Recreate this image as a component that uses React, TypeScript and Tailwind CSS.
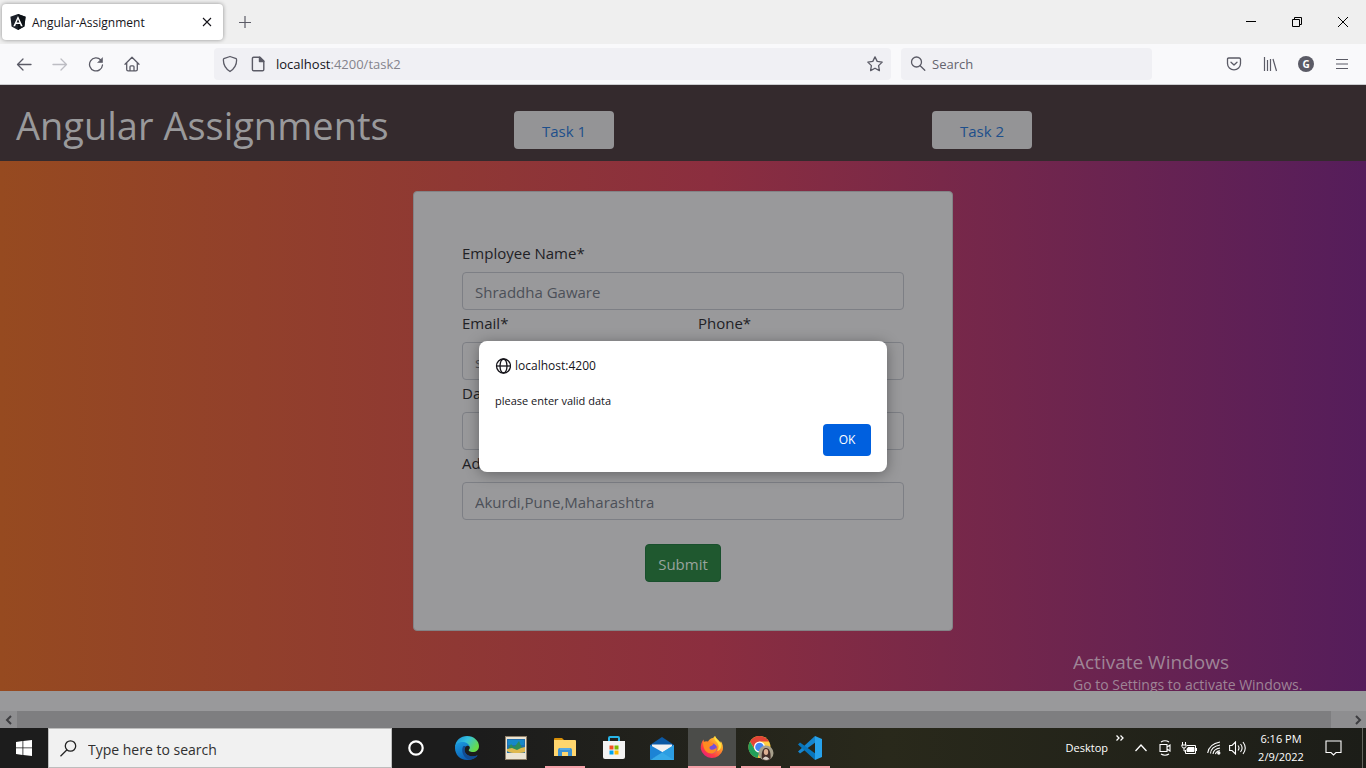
import React from 'react';

type FieldProps = { id: string; label: string; placeholder?: string; className?: string };

function Field({ id, label, placeholder, className = '' }: FieldProps) {
  return (
    <div className={`flex flex-col ${className}`}>
      <label htmlFor={id} className="mb-2 h-6 leading-[26px] text-[#212125]">{label}</label>
      <input
        id={id}
        placeholder={placeholder}
        className="h-[38px] w-full rounded border border-[#7d7f85] bg-transparent px-3 pt-0.5 text-[#212125] placeholder:text-[#4c5058] placeholder:opacity-100"
      />
    </div>
  );
}

function AngularIcon() {
  return (
    <svg width="16" height="16" viewBox="0 0 16 16" aria-hidden="true">
      <path d="M8 0 15.6 2.7 14.4 12.6 8 16 1.6 12.6.4 2.7Z" fill="#1b2129" />
      <path d="M8 0 15.6 2.7 14.4 12.6 8 16Z" fill="#0c1116" />
      <path d="M8 1.9 3.3 12.3h1.8l.9-2.4h4l.9 2.4h1.8ZM8 5.2l1.4 3.3H6.6Z" fill="#fff" fillRule="evenodd" />
    </svg>
  );
}

function TabStrip() {
  return (
    <div className="flex h-11 items-center bg-[#efefef]">
      <div className="ml-[2px] flex h-9 w-[221px] items-center rounded bg-white pl-2 shadow-[0_0_4px_rgba(0,0,0,0.4)]">
        <AngularIcon />
        <span className="ml-[6px] flex-1 pt-0.5 text-[12px] text-[#15141a]">Angular-Assignment</span>
        <button aria-label="Close tab" className="flex h-6 w-8 items-center justify-center">
          <svg width="10" height="10" viewBox="0 0 10 10" stroke="#15141a" strokeWidth="1.1"><path d="M1 1 9 9M9 1 1 9" /></svg>
        </button>
      </div>
      <button aria-label="New tab" className="ml-[14px] flex size-4 items-center justify-center">
        <svg width="14" height="14" viewBox="0 0 14 14" stroke="#5b5b66" strokeWidth="1.2"><path d="M7 1v12M1 7.500h12" /></svg>
      </button>
      <div className="ml-auto flex">
        <button aria-label="Minimize" className="flex h-8 w-[46px] items-center justify-center">
          <svg width="10" height="10" viewBox="0 0 10 10"><path d="M0 4h10v1H0z" /></svg>
        </button>
        <button aria-label="Restore" className="flex h-8 w-[46px] items-center justify-center">
          <svg width="10" height="10" viewBox="0 0 10 10" fill="none" stroke="#000"><path d="M.5 2.5h7v7h-7zM2.5 2V.5h7v7H8" /></svg>
        </button>
        <button aria-label="Close window" className="flex h-8 w-[46px] items-center justify-center">
          <svg width="10" height="10" viewBox="0 0 10 10" stroke="#000"><path d="M0 0 10 10M10 0 0 10" /></svg>
        </button>
      </div>
    </div>
  );
}

function NavBar() {
  return (
    <div className="flex h-[41px] items-center border-b border-[#cccdd0] bg-[#f9f9fb] text-[13px]">
      <div className="flex w-[214px] items-center gap-5 pl-4">
        <button aria-label="Back">
          <svg width="16" height="16" viewBox="0 0 16 16" fill="none" stroke="#5b5b66" strokeWidth="1.3" strokeLinecap="round" strokeLinejoin="round"><path d="M15 8.500H1.5M7 3 1.5 8.500 7 14" /></svg>
        </button>
        <button aria-label="Forward">
          <svg width="16" height="16" viewBox="0 0 16 16" fill="none" stroke="#bdbdc3" strokeWidth="1.3" strokeLinecap="round" strokeLinejoin="round"><path d="M1 8.500h13.5M9 3 14.5 8.500 9 14" /></svg>
        </button>
        <button aria-label="Reload">
          <svg width="16" height="16" viewBox="0 0 16 16" fill="none" stroke="#5b5b66" strokeWidth="1.3" strokeLinecap="round"><path d="M12.8 4A6.5 6.5 0 1 0 14.5 9" /><path d="M14.5 2V6.500H10z" fill="#5b5b66" strokeWidth=".6" /></svg>
        </button>
        <button aria-label="Home">
          <svg width="16" height="16" viewBox="0 0 16 16" fill="none" stroke="#5b5b66" strokeWidth="1.3" strokeLinecap="round" strokeLinejoin="round"><path d="M1 8.200 8 1.200l7 7M2.700 6.800v6.700q0 1.400 1.400 1.400h7.800q1.400 0 1.400-1.400V6.800M6 14.800v-4q0-1 1-1h2q1 0 1 1v4" /></svg>
        </button>
      </div>
      <div className="flex h-8 flex-1 items-center rounded bg-[#f0f0f4] px-2">
        <svg width="16" height="18" viewBox="0 0 16 18" fill="none" stroke="#5b5b66" strokeWidth="1.3" strokeLinejoin="round"><path d="M8 1.500 14.200 3.700q.4 0 .4 1.500 0 7-6.600 11.300Q1.400 12.200 1.400 5.200q0-1.500.4-1.500Z" /></svg>
        <svg className="ml-3" width="16" height="16" viewBox="0 0 16 16" fill="none" stroke="#5b5b66" strokeWidth="1.4" strokeLinejoin="round"><path d="M3.700 1.200H10L13.800 5v8.500q0 1.300-1.300 1.300H3.700q-1.300 0-1.300-1.300v-11q0-1.300 1.300-1.300Z" /><path d="M9.500 1.200v4.300h4.300z" fill="#5b5b66" /></svg>
        <div className="ml-[10px] flex-1 pt-0.5 text-[#15141a]">localhost<span className="text-[#84848c]">:4200/task2</span></div>
        <button aria-label="Bookmark">
          <svg width="16" height="16" viewBox="0 0 16 16" fill="none" stroke="#5b5b66" strokeWidth="1.3" strokeLinejoin="round"><path d="m8 .9 2.200 4.500 5 .7-3.600 3.500.8 5L8 12.200l-4.400 2.400.8-5L.8 6.100l5-.7Z" /></svg>
        </button>
      </div>
      <label className="ml-[10px] flex h-8 w-[251px] items-center rounded bg-[#f0f0f4] pl-[9px]">
        <svg width="16" height="16" viewBox="0 0 16 16" fill="none" stroke="#5b5b66" strokeWidth="1.3" strokeLinecap="round"><circle cx="6.500" cy="6" r="5" /><path d="m10.200 9.700 4.600 4.600" /></svg>
        <input aria-label="Search the web" placeholder="Search" className="ml-[6px] w-40 bg-transparent pt-0.5 placeholder:text-[#64646e]" />
      </label>
      <div className="ml-[74px] flex items-center gap-5 pr-4">
        <button aria-label="Pocket">
          <svg width="16" height="16" viewBox="0 0 16 16" fill="none" stroke="#5b5b66" strokeWidth="1.3" strokeLinecap="round" strokeLinejoin="round"><path d="M2.700 2h10.600q1.200 0 1.200 1.200v4.300a6.500 6.300 0 0 1-13 0V3.200Q1.500 2 2.700 2ZM5 6.300l3 2.800 3-2.800" /></svg>
        </button>
        <button aria-label="Library">
          <svg width="16" height="16" viewBox="0 0 16 16" fill="none" stroke="#5b5b66" strokeWidth="1.2"><path d="M2.500 1v14M5.500 4v11M8.500 3v12M11 3l3.500 12" /></svg>
        </button>
        <button aria-label="Account" className="flex size-4 items-center justify-center rounded-full bg-[#5b5b66] text-[10px] font-bold text-white">G</button>
        <button aria-label="Menu">
          <svg width="16" height="16" viewBox="0 0 16 16" stroke="#5b5b66" strokeWidth="1.2"><path d="M2 3.500h12M2 8h12M2 12.500h12" /></svg>
        </button>
      </div>
    </div>
  );
}

function AlertDialog() {
  return (
    <div role="alertdialog" aria-label="localhost:4200" className="absolute left-1/2 top-64 flex h-[131px] w-[408px] -translate-x-1/2 flex-col rounded-lg bg-white p-4 text-[11px] text-[#15141a] shadow-[0_2px_14px_rgba(0,0,0,0.35)]">
      <div className="flex h-[18px] items-center gap-1 text-[12px] font-medium">
        <svg width="16" height="16" viewBox="0 0 16 16" fill="none" stroke="#15141a" strokeWidth="1.3"><circle cx="8.500" cy="8" r="7" /><ellipse cx="8.500" cy="8" rx="3.500" ry="7" /><path d="M1.500 8h14" /></svg>
        localhost:4200
      </div>
      <p className="mt-[17px] leading-[18px]">please enter valid data</p>
      <button className="mt-auto h-8 w-12 self-end rounded bg-[#0060df] text-[12px] font-medium text-white">OK</button>
    </div>
  );
}

function Page() {
  return (
    <main className="relative flex flex-1 flex-col bg-[#99999b] text-[15px]">
      <header className="flex h-[76px] items-center bg-[#342a2d] pl-4 pt-[14px]">
        <h1 className="mb-2.5 w-[498px] text-[38px] leading-[48px] text-[#99999b]">Angular Assignments</h1>
        <nav className="flex">
          <a href="#task1" className="h-[38px] w-[100px] rounded bg-[#949496] text-center leading-[40px] text-[#1d4f8b]">Task 1</a>
          <a href="#task2" className="ml-[318px] h-[38px] w-[100px] rounded bg-[#949496] text-center leading-[40px] text-[#1d4f8b]">Task 2</a>
        </nav>
      </header>
      <section className="flex h-[530px] items-start justify-center bg-linear-to-r/srgb from-[#964a20] via-[#8b2e3f] via-52% to-[#551d5b] pt-[30px]">
        <form className="flex h-[440px] w-[540px] flex-col rounded border border-[#838386] bg-[#99999b] px-12 pt-12">
          <Field id="name" label="Employee Name*" placeholder="Shraddha Gaware" />
          <div className="flex gap-[30px]">
            <Field id="email" label="Email*" placeholder="s" className="flex-1" />
            <Field id="phone" label="Phone*" className="flex-1" />
          </div>
          <Field id="dob" label="Date*" />
          <Field id="address" label="Address*" placeholder="Akurdi,Pune,Maharashtra" />
          <button type="button" className="mt-6 h-[38px] w-[76px] self-center rounded border border-[#194f2d] bg-[#1f582f] pt-0.5 text-[#99a39d]">Submit</button>
        </form>
      </section>
      <AlertDialog />
      <div className="mt-auto flex h-[17px] items-center bg-[#8e8e90]">
        <button aria-label="Scroll left" className="flex w-[17px] justify-center"><svg width="8" height="10" viewBox="0 0 8 10" fill="none" stroke="#3d3d40" strokeWidth="2"><path d="M6 1 2 5l4 4" /></svg></button>
        <div className="h-full flex-1 bg-[#7e7e80]" />
        <button aria-label="Scroll right" className="flex w-[35px] justify-end pr-1"><svg width="8" height="10" viewBox="0 0 8 10" fill="none" stroke="#3d3d40" strokeWidth="2"><path d="m2 1 4 4-4 4" /></svg></button>
      </div>
      <div className="absolute right-[53px] top-[565px] h-[41px] w-60 overflow-hidden whitespace-nowrap text-[#9e8496]">
        <div className="text-[19px] leading-6">Activate Windows</div>
        <div className="text-[14px] leading-[22px]">Go to Settings to activate Windows.</div>
      </div>
    </main>
  );
}

function EdgeIcon() {
  return (
    <svg width="24" height="24" viewBox="0 0 24 24">
      <defs>
        <linearGradient id="edgeTop" x1="0" y1="0" x2="1" y2=".5"><stop stopColor="#1789d5" /><stop offset=".5" stopColor="#35c1de" /><stop offset="1" stopColor="#67dc48" /></linearGradient>
        <linearGradient id="edgeLow" x1="0" y1="0" x2=".6" y2="1"><stop stopColor="#1b9de2" /><stop offset="1" stopColor="#0a58ad" /></linearGradient>
      </defs>
      <path d="M0 12C0 4 6 0 12 0c7 0 12 5 12 10 0 4-3 6-6 6-3 0-5-1-4-2.500 1-1 1-2 .5-3C13 8 11 7 8 7 4 7 1 9 0 12Z" fill="url(#edgeTop)" />
      <path d="M0 12c0-4 3.500-6 7.500-6C11 6 14 8 14.600 10.500 12 8.500 9 11 9.500 15c.5 3 4 6 9 5.500 2-.2 3.500-1.500 4-1C21 22 17 24 12 24 5 24 0 18.500 0 12Z" fill="url(#edgeLow)" />
      <path d="M8.500 10C6 13 7 21 14 23.800c4-.5 7-2.300 8.700-4.600-7 3.200-13-1-13.100-4.700-.1-2 .4-3.500 1.600-4.500Z" fill="#124b91" />
    </svg>
  );
}

function PhotosIcon() {
  return (
    <svg width="22" height="24" viewBox="0 0 22 24">
      <path d="M0 0h22v24H0z" fill="#8f806a" /><path d="M1 1h20v22H1z" fill="#ece4d3" />
      <path d="M2 3h18v14H2z" fill="#216fad" /><path d="M3 4h16v5H3z" fill="#1688c9" />
      <path d="m3 13 3-5 3 3 2-2 3-4 2 5 3 4v2H3z" fill="#2e8d58" /><path d="m2 13 5-1 5 2 4-2 4-1v5q-2 1-9 1t-9-2z" fill="#dfb950" />
    </svg>
  );
}

function FolderIcon() {
  return (
    <svg width="22" height="20" viewBox="0 0 22 20">
      <path d="M0 1q0-1 1-1h7l2 2h-10z" fill="#d78f08" /><path d="M0 2h21q1 0 1 1v15H0z" fill="#ffd66e" />
      <path d="M4 18v-6q0-2 2-2h10q2 0 2 2v6h-4v-4H8v4z" fill="#3c91d2" /><path d="M6 10h10v2H6z" fill="#58aae3" />
    </svg>
  );
}

function StoreIcon() {
  return (
    <svg width="24" height="24" viewBox="0 0 24 24">
      <path d="M7 6V2q0-1 1-1h8q1 0 1 1v4" fill="none" stroke="#28b5e8" strokeWidth="2" />
      <path d="M1 5h22v16q0 2-2 2H3q-2 0-2-2z" fill="#f3f3f3" />
      <path d="M7.500 9.500h4v4h-4z" fill="#f25022" /><path d="M12.500 9.500h4v4h-4z" fill="#7fba00" /><path d="M7.500 14.500h4v4h-4z" fill="#00a4ef" /><path d="M12.500 14.500h4v4h-4z" fill="#ffb900" />
    </svg>
  );
}

function MailIcon() {
  return (
    <svg width="24" height="23" viewBox="0 0 24 23">
      <path d="M0 8 12 0l12 8v5H0z" fill="#0c59a4" /><path d="M2 7.500h20v8H2z" fill="#f3f3f3" />
      <path d="m0 8 14 8L0 23z" fill="#1c83d5" /><path d="M24 8v15H0z" fill="#36a9e8" /><path d="m24 8-12 7.500L24 23z" fill="#2c9de2" />
    </svg>
  );
}

function FirefoxIcon() {
  return (
    <svg width="24" height="24" viewBox="0 0 24 24">
      <defs><linearGradient id="fox" x1="1" y1="0" x2=".2" y2="1"><stop stopColor="#fff04c" /><stop offset=".4" stopColor="#ff9b28" /><stop offset=".75" stopColor="#ff3d43" /><stop offset="1" stopColor="#e31b83" /></linearGradient></defs>
      <path d="M13 2q2-2 2-2c1 3 4 3.500 5 7q1-1 .8-2c2 3 2.500 6 2 9A11.400 11.400 0 0 1 .8 13C.5 9 1.500 6 3.500 3.500L4 6q2-1.200 4-.5Q10 2 13 2Z" fill="url(#fox)" />
      <circle cx="12" cy="12.500" r="5" fill="#7650d8" /><path d="M3 6c4-1 6 1 8 1 3 0 3 2 0 3-2 .5-2 2.500-.5 3.500 3 1 5-1 6-2 1 5-4 7-8 5.500C4.500 15.500 3 11 3 6Z" fill="#ff8b21" />
      <path d="M15 0c-2 4 2 5 3 8 1.500 3 0 6-1 7 5-1 5-7 3-9-2-2-4-3-5-6Z" fill="#ffe23f" />
    </svg>
  );
}

function ChromeIcon() {
  return (
    <svg width="26" height="26" viewBox="0 0 26 26">
      <circle cx="11.500" cy="12" r="11" fill="#ffcd41" /><path d="M2 6.500A11 11 0 0 1 21 6.500H11.500L7 14.500z" fill="#e34436" /><path d="M2 6.500 7 15l4.500 2.500L9.500 23A11 11 0 0 1 2 6.500Z" fill="#22a05a" />
      <circle cx="11.500" cy="12" r="5.500" fill="#fff" /><circle cx="11.500" cy="12" r="4.300" fill="#4285f4" />
      <circle cx="18" cy="18" r="7.500" fill="#a7a08c" /><path d="M14 24c-1-4 0-11 4-11s5 6 4.500 11Q18 27 14 24Z" fill="#45302b" /><ellipse cx="18" cy="17" rx="2.200" ry="3" fill="#deb093" /><path d="M14.500 24q3-5 7 0-3 2-7 0Z" fill="#d9cfc6" />
    </svg>
  );
}

function CodeIcon() {
  return (
    <svg width="24" height="24" viewBox="0 0 24 24">
      <path d="M17 0 0 15.500l2 2L18 6z" fill="#1686cf" /><path d="M17 24 0 8.500l2-2L18 18z" fill="#0876bd" /><path d="m17 0 7 3v18l-7 3z" fill="#27a2eb" />
    </svg>
  );
}

const apps = [
  { name: 'Cortana', icon: <svg width="16" height="16" viewBox="0 0 16 16" fill="none" stroke="#fff" strokeWidth="2.2"><circle cx="8" cy="8" r="6.700" /></svg>, width: 'w-12', line: '' },
  { name: 'Microsoft Edge', icon: <EdgeIcon />, width: 'w-[54px]', line: '' },
  { name: 'Photos', icon: <PhotosIcon />, width: 'w-11', line: '' },
  { name: 'File Explorer', icon: <FolderIcon />, width: 'w-[54px]', line: 'w-10' },
  { name: 'Microsoft Store', icon: <StoreIcon />, width: 'w-11', line: '' },
  { name: 'Mail', icon: <MailIcon />, width: 'w-[52px]', line: '' },
  { name: 'Firefox', icon: <FirefoxIcon />, width: 'w-12 bg-[#4b4c49]', line: 'w-12' },
  { name: 'Chrome', icon: <ChromeIcon />, width: 'w-[50px]', line: 'w-10' },
  { name: 'Visual Studio Code', icon: <CodeIcon />, width: 'w-12', line: 'w-10' },
];

function Taskbar() {
  return (
    <footer className="flex h-10 items-center bg-linear-to-r/srgb from-[#1c1c1c] from-35% via-[#29291b] via-65% to-[#1c1d18] text-[11px] text-white">
      <button aria-label="Start" className="flex h-10 w-12 items-center justify-center">
        <svg width="16" height="16" viewBox="0 0 16 16" fill="#fff"><path d="m0 2 6.500-1v6.500H0zM7.300.9 16 0v7.500H7.300zM0 8.300h6.500V15L0 14zM7.300 8.300H16V16l-8.700-1z" /></svg>
      </button>
      <label className="flex h-10 w-[344px] items-center border border-[#bdbdbd] bg-[#f1f1f1] pl-[11px]">
        <svg width="17" height="17" viewBox="0 0 17 17" fill="none" stroke="#222" strokeWidth="1.3"><circle cx="10.500" cy="6" r="5.200" /><path d="M7 9.700.5 16.200" /></svg>
        <input aria-label="Type here to search" placeholder="Type here to search" className="ml-[11px] w-60 bg-transparent pt-0.5 text-[14px] placeholder:text-[#303030]" />
      </label>
      <div className="flex h-10">
        {apps.map((app) => (
          <button key={app.name} aria-label={app.name} className={`flex h-10 flex-col items-center ${app.width}`}>
            <span className="flex h-[38px] items-center pt-0.5">{app.icon}</span>
            <span className={`h-0.5 bg-[#f5a0a8] ${app.line}`} />
          </button>
        ))}
      </div>
      <div className="ml-auto flex h-10 items-center">
        <span>Desktop</span>
        <button aria-label="More toolbars" className="mb-5 ml-2">
          <svg width="8" height="6" viewBox="0 0 8 6" fill="none" stroke="#fff" strokeWidth="1.3"><path d="m.5.500 2.500 2.500L.5 5.500M4.500.500 7 3 4.500 5.500" /></svg>
        </button>
        <button aria-label="Hidden icons" className="ml-[11px]"><svg width="12" height="8" viewBox="0 0 12 8" fill="none" stroke="#fff" strokeWidth="1.3"><path d="m.5 7 5.500-6 5.500 6" /></svg></button>
        <button aria-label="Meet now" className="ml-3"><svg width="12" height="16" viewBox="0 0 12 16" fill="none" stroke="#fff" strokeWidth="1.1"><path d="M1 4.500h7v7H1zM8 7l3-2v6L8 9M2 2q4-2.500 8 0M2 14q4 2.500 8 0" /></svg></button>
        <button aria-label="Battery" className="ml-[10px]"><svg width="16" height="13" viewBox="0 0 16 13" fill="none" stroke="#fff"><path d="M6 3.500h8.500v8h-10V8M15.500 6v3M.5 3h5M1.500 0v3M4.500 0v3M1 3v1.500Q1 6 3 6t2-1.500V3M3 6v3h2" /><path d="M7 5.500h6v4H6V7z" fill="#fff" /></svg></button>
        <button aria-label="Network" className="ml-[10px]"><svg width="14" height="14" viewBox="0 0 14 14" fill="none" stroke="#fff" strokeWidth="1.1"><path d="M.7 12Q2 3 13 1M3.500 12.500Q4 5.500 13 4M6 13Q6.500 8 13 7M8.500 13.200q.5-3.200 4.500-3.500" /><circle cx="11.800" cy="12" r="1.100" fill="#fff" /></svg></button>
        <button aria-label="Volume" className="ml-2"><svg width="17" height="14" viewBox="0 0 17 14" fill="none" stroke="#fff" strokeWidth="1.1"><path d="M.6 4.500H3L6.500 1v12L3 9.500H.6zM9 4.500q2 2.500 0 5M11.500 3q3.200 4 0 8M14 1q4.500 6 0 12" /></svg></button>
        <div className="ml-3 w-[46px] whitespace-nowrap text-center leading-[18px]"><div>6:16 PM</div><div>2/9/2022</div></div>
        <button aria-label="Notifications" className="ml-[21px] mr-5"><svg width="17" height="16" viewBox="0 0 17 16" fill="none" stroke="#fff" strokeWidth="1.1"><path d="M1 1h15v11.500h-5L8.500 15 6 12.500H1z" /></svg></button>
        <div className="h-10 w-1 border-l border-[#65665f]" />
      </div>
    </footer>
  );
}

export default function App() {
  return (
    <div className="flex min-h-screen flex-col font-['Open_Sans','Noto_Sans',sans-serif]">
      <TabStrip />
      <NavBar />
      <Page />
      <Taskbar />
    </div>
  );
}
